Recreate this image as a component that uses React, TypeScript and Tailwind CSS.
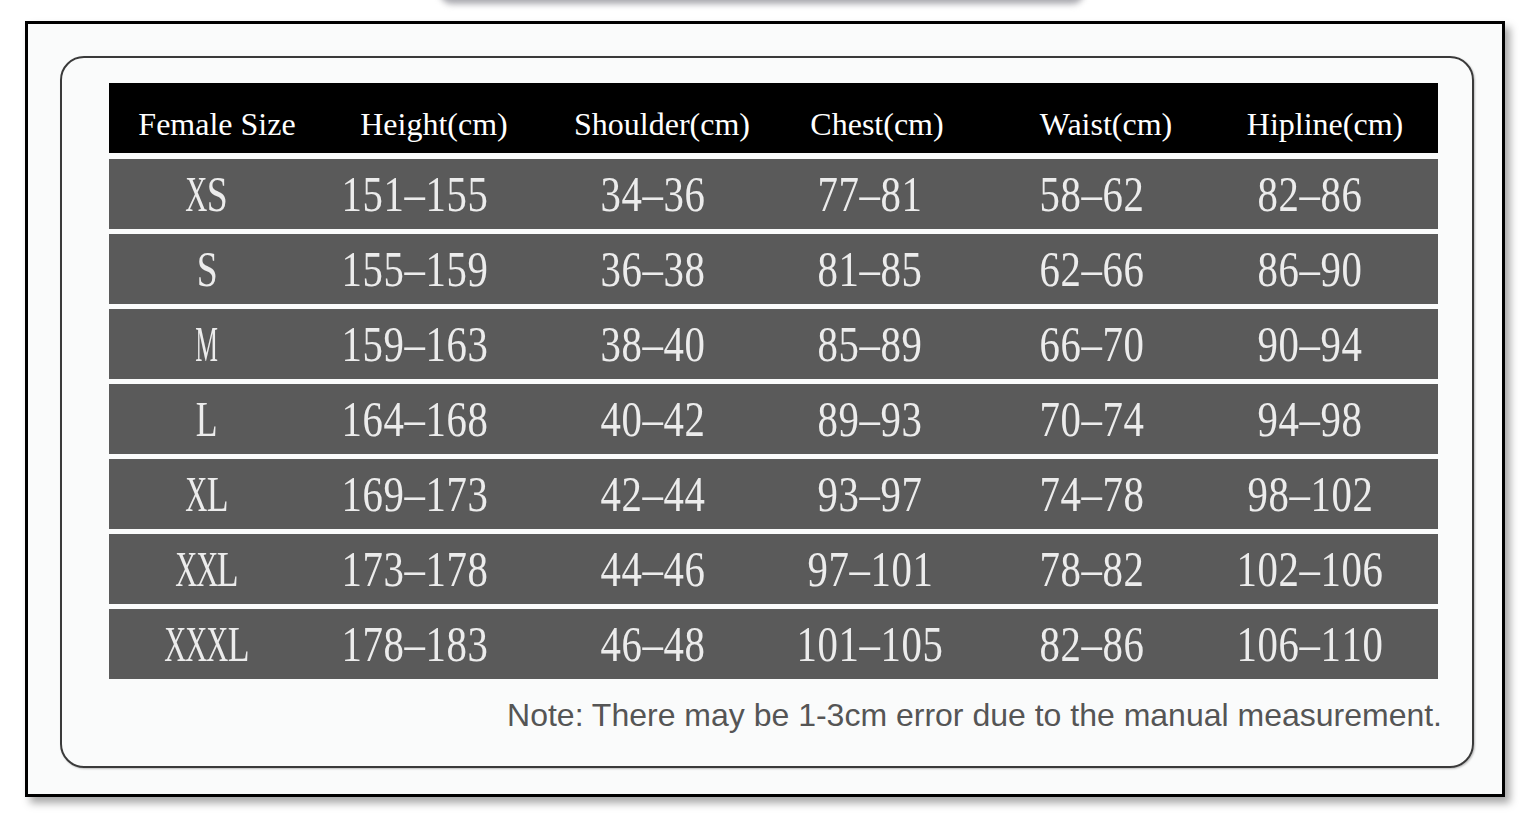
import React from "react";

const headers = [
  { t: "Female Size", pl: "pl-[20px]" },
  { t: "Height(cm)", pl: "pl-[38px]" },
  { t: "Shoulder(cm)", pl: "pl-[18px]" },
  { t: "Chest(cm)", pl: "pl-[14px]" },
  { t: "Waist(cm)", pl: "pl-[28px]" },
  { t: "Hipline(cm)", pl: "pl-[30px]" },
];

const rows = [
  ["XS", "151-155", "34-36", "77-81", "58-62", "82-86"],
  ["S", "155-159", "36-38", "81-85", "62-66", "86-90"],
  ["M", "159-163", "38-40", "85-89", "66-70", "90-94"],
  ["L", "164-168", "40-42", "89-93", "70-74", "94-98"],
  ["XL", "169-173", "42-44", "93-97", "74-78", "98-102"],
  ["XXL", "173-178", "44-46", "97-101", "78-82", "102-106"],
  ["XXXL", "178-183", "46-48", "101-105", "82-86", "106-110"],
];

const charScale: Record<string, string> = {
  X: "scale-x-[0.6]",
  S: "scale-x-[0.74]",
  L: "scale-x-[0.7]",
  M: "scale-x-[0.5]",
};

function Glyphs({ text }: { text: string }) {
  return (
    <div className="flex">
      {text.split("").map((ch, i) => (
        <span key={i} className="w-[21px] flex justify-center">
          <span
            className={`inline-block ${charScale[ch] ?? "scale-x-[0.8]"} text-[51px] leading-none text-[#ececec] font-['Liberation_Serif',serif]`}
          >
            {ch === "-" ? "\u2013" : ch}
          </span>
        </span>
      ))}
    </div>
  );
}

const grid = "grid grid-cols-[196px_220px_256px_178px_266px_170px_1fr]";

export default function App() {
  return (
    <div className="relative w-[1537px] h-[826px] bg-white overflow-hidden pt-[21px] pl-[25px]">
      <div className="absolute top-[-24px] left-[440px] w-[644px] h-[28px] rounded-[12px] bg-[#a8a8ae] blur-[3px]" />
      <div className="w-[1480px] h-[776px] border-[3px] border-black bg-[#fafbfb] shadow-[5px_6px_8px_rgba(0,0,0,0.35)] pt-[32px] pl-[32px]">
        <div className="w-[1414px] h-[712px] border-2 border-[#3a3a3a] rounded-[24px] pt-[25px] pl-[47px] shadow-[1px_1px_2px_rgba(0,0,0,0.25)]">
          <div className="w-[1329px] flex flex-col gap-[5px]">
            <div className={`${grid} h-[70px] bg-black mb-[1px]`}>
              {headers.map((h, i) => (
                <div
                  key={i}
                  className={`flex items-center justify-center pt-[12px] ${h.pl} text-white text-[32px] whitespace-nowrap font-['Liberation_Serif',serif]`}
                >
                  {h.t}
                </div>
              ))}
              <div />
            </div>
            {rows.map((r, ri) => (
              <div key={ri} className={`${grid} h-[70px] bg-[#5a5a5a]`}>
                {r.map((c, ci) => (
                  <div key={ci} className="flex items-center justify-center">
                    <Glyphs text={c} />
                  </div>
                ))}
                <div />
              </div>
            ))}
          </div>
          <div className="w-[1333px] text-right pt-[20px] text-[32px] leading-none text-[#555555] font-['Liberation_Sans',Arial,sans-serif] whitespace-nowrap">
            Note: There may be 1-3cm error due to the manual measurement.
          </div>
        </div>
      </div>
    </div>
  );
}
